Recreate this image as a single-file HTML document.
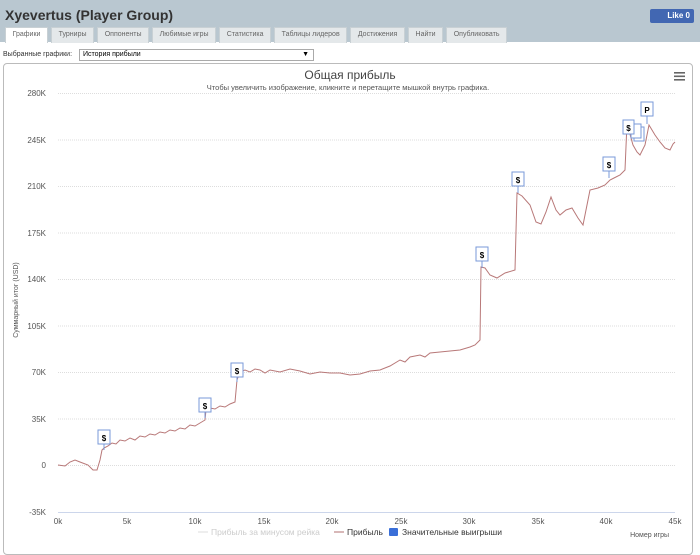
<!DOCTYPE html><html><head><meta charset="utf-8"><style>
body{margin:0;width:700px;height:542px;overflow:hidden;background:#fff;font-family:"Liberation Sans","Noto Sans CJK SC",sans-serif;position:relative}
.hdr{position:absolute;left:0;top:0;width:700px;height:42px;background:#b9c7d0}
.title{position:absolute;left:5px;top:7px;font-size:14px;font-weight:bold;color:#333}
.tabs{position:absolute;left:5px;top:27px;height:15px;display:flex;gap:3px}
.tab{background:#e4e8ea;border:1px solid #c8d0d4;border-bottom:none;font-size:7px;color:#666;padding:3px 6.6px 0;height:12px;white-space:nowrap}
.tab.a{background:#fff}
.like{position:absolute;left:650px;top:9px;width:44px;height:14px;background:#4267b2;color:#fff;font-size:8px;font-weight:bold;border-radius:2px;line-height:14px;text-align:right;padding-right:4px;box-sizing:border-box}
.sel{position:absolute;left:3px;top:51px;font-size:7px;color:#333}
.box{position:absolute;left:79px;top:49px;width:230px;height:10px;border:1px solid #aaa;font-size:7px;line-height:10px;padding-left:3px;box-sizing:content-box}
.chart{position:absolute;left:3px;top:63px;width:688px;height:490px;border:1px solid #bbb;border-radius:4px}
</style></head><body>
<div class="hdr"></div>
<div class="title">Xyevertus (Player Group)</div>
<div class="tabs"><div class="tab a">Графики</div><div class="tab">Турниры</div><div class="tab">Оппоненты</div><div class="tab">Любимые игры</div><div class="tab">Статистика</div><div class="tab">Таблицы лидеров</div><div class="tab">Достижения</div><div class="tab">Найти</div><div class="tab">Опубликовать</div></div>
<div class="like">Like 0</div>
<div class="sel">Выбранные графики:</div>
<div class="box">История прибыли<span style="position:absolute;right:4px">▼</span></div>
<div class="chart"></div>
<svg style="position:absolute;left:0;top:0" width="700" height="542" font-family="Liberation Sans, sans-serif">
<text x="350" y="79" font-size="12" fill="#444" text-anchor="middle">Общая прибыль</text>
<text x="348" y="90" font-size="7.5" fill="#555" text-anchor="middle">Чтобы увеличить изображение, кликните и перетащите мышкой внутрь графика.</text>
<g fill="#666"><rect x="674" y="72" width="11" height="1.6"/><rect x="674" y="75.5" width="11" height="1.6"/><rect x="674" y="79" width="11" height="1.6"/></g>
<g stroke="#ddd" stroke-dasharray="1,1" stroke-width="1">
<line x1="58" x2="675" y1="93.5" y2="93.5"/><line x1="58" x2="675" y1="140" y2="140"/><line x1="58" x2="675" y1="186.5" y2="186.5"/><line x1="58" x2="675" y1="233" y2="233"/><line x1="58" x2="675" y1="279.5" y2="279.5"/><line x1="58" x2="675" y1="326" y2="326"/><line x1="58" x2="675" y1="372.5" y2="372.5"/><line x1="58" x2="675" y1="419" y2="419"/><line x1="58" x2="675" y1="465.5" y2="465.5"/></g>
<line x1="58" x2="675" y1="512.5" y2="512.5" stroke="#ccd6eb"/>
<g font-size="8" fill="#555" text-anchor="end">
<text x="46" y="96">280K</text><text x="46" y="143">245K</text><text x="46" y="189">210K</text><text x="46" y="236">175K</text><text x="46" y="282">140K</text><text x="46" y="329">105K</text><text x="46" y="375">70K</text><text x="46" y="422">35K</text><text x="46" y="468">0</text><text x="46" y="515">-35K</text></g>
<g font-size="8" fill="#555" text-anchor="middle">
<text x="58" y="524">0k</text><text x="127" y="524">5k</text><text x="195" y="524">10k</text><text x="264" y="524">15k</text><text x="332" y="524">20k</text><text x="401" y="524">25k</text><text x="469" y="524">30k</text><text x="538" y="524">35k</text><text x="606" y="524">40k</text><text x="675" y="524">45k</text></g>
<text x="18" y="300" font-size="7" fill="#555" transform="rotate(-90 18 300)" text-anchor="middle">Суммарный итог (USD)</text>
<text x="669" y="537" font-size="7" fill="#555" text-anchor="end">Номер игры</text>
<g font-size="8.5"><line x1="198" x2="208" y1="532" y2="532" stroke="#ddd"/><text x="211" y="535" fill="#ccc">Прибыль за минусом рейка</text>
<line x1="334" x2="344" y1="532" y2="532" stroke="#b07070"/><text x="347" y="535" fill="#333">Прибыль</text>
<rect x="389" y="528" width="9" height="8" fill="#3a6fd8" rx="1"/><text x="402" y="535" fill="#333">Значительные выигрыши</text></g>
<polyline fill="none" stroke="#b87878" stroke-width="1" points="58,465 65,466 70,462 75,460 80,462 88,465 93,470 97,470 100,460 102,450 104,448 108,446 112,443 116,444 120,440 125,441 130,438 135,440 140,436 145,437 150,434 155,435 160,432 165,433 170,430 175,431 180,428 185,429 190,425 195,426 200,423 205,420 206,410 210,408 215,409 220,406 225,407 230,404 235,402 237,380 240,372 245,370 250,372 255,369 260,370 265,373 270,370 280,372 290,369 300,371 310,374 320,372 330,373 340,373 350,375 360,374 370,371 380,370 390,366 400,360 405,362 410,357 420,355 425,357 430,353 440,352 450,351 460,350 470,347 475,345 480,340 481,267 485,268 490,275 497,278 505,273 515,270 517,193 522,196 530,205 536,222 541,224 546,212 551,197 556,210 560,215 566,210 572,208 578,218 583,225 587,205 590,190 598,188 605,185 610,180 614,178 620,175 625,170 627,123 631,138 633,145 637,152 640,155 645,145 649,125 655,135 660,142 665,148 670,150 673,144 675,142"/>
<g font-size="8" font-weight="bold" fill="#000" text-anchor="middle">
<g><line x1="104" x2="104" y1="444" y2="450" stroke="#7a9ad8"/><rect x="98" y="430" width="12" height="14" fill="#fff" stroke="#7a9ad8"/><text x="104" y="441">$</text></g>
<g><line x1="205" x2="205" y1="412" y2="418" stroke="#7a9ad8"/><rect x="199" y="398" width="12" height="14" fill="#fff" stroke="#7a9ad8"/><text x="205" y="409">$</text></g>
<g><line x1="237" x2="237" y1="377" y2="382" stroke="#7a9ad8"/><rect x="231" y="363" width="12" height="14" fill="#fff" stroke="#7a9ad8"/><text x="237" y="374">$</text></g>
<g><line x1="482" x2="482" y1="261" y2="268" stroke="#7a9ad8"/><rect x="476" y="247" width="12" height="14" fill="#fff" stroke="#7a9ad8"/><text x="482" y="258">$</text></g>
<g><line x1="518" x2="518" y1="186" y2="193" stroke="#7a9ad8"/><rect x="512" y="172" width="12" height="14" fill="#fff" stroke="#7a9ad8"/><text x="518" y="183">$</text></g>
<g><line x1="609" x2="609" y1="171" y2="178" stroke="#7a9ad8"/><rect x="603" y="157" width="12" height="14" fill="#fff" stroke="#7a9ad8"/><text x="609" y="168">$</text></g>
<rect x="634" y="127" width="10" height="14" fill="#fff" stroke="#7a9ad8"/><rect x="631" y="124" width="10" height="14" fill="#fff" stroke="#7a9ad8"/>
<g><rect x="623" y="120" width="11" height="14" fill="#fff" stroke="#7a9ad8"/><text x="628.5" y="131">$</text></g>
<g><line x1="647" x2="647" y1="116" y2="124" stroke="#7a9ad8"/><rect x="641" y="102" width="12" height="14" fill="#fff" stroke="#7a9ad8"/><text x="647" y="113">P</text></g>
</g>
</svg>
</body></html>
